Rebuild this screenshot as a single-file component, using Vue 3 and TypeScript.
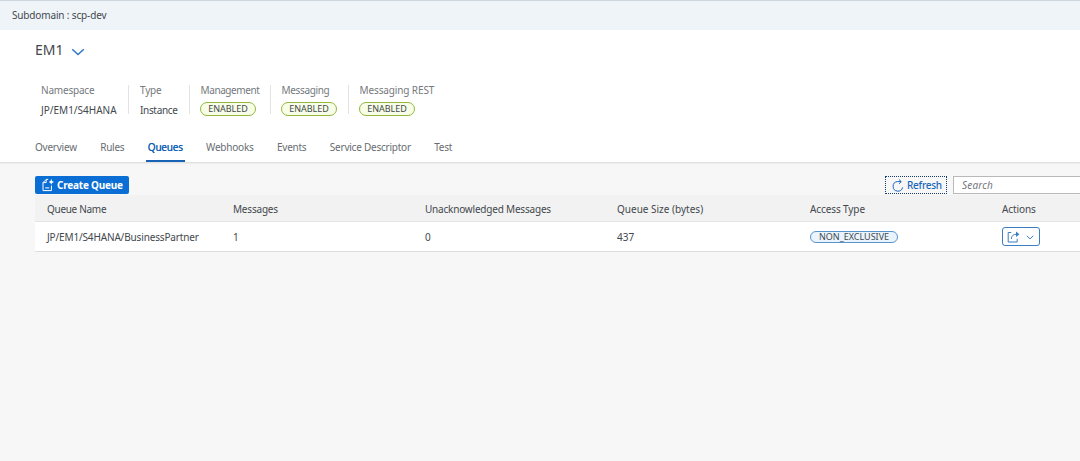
<script setup lang="ts">
interface Attribute {
  label: string
  value: string
  badge: boolean
  key: string
}

const attributes: Attribute[] = [
  { label: 'Namespace', value: 'JP/EM1/S4HANA', badge: false, key: 'namespace' },
  { label: 'Type', value: 'Instance', badge: false, key: 'type' },
  { label: 'Management', value: 'ENABLED', badge: true, key: 'management' },
  { label: 'Messaging', value: 'ENABLED', badge: true, key: 'messaging' },
  { label: 'Messaging REST', value: 'ENABLED', badge: true, key: 'rest' },
]

const tabs: string[] = ['Overview', 'Rules', 'Queues', 'Webhooks', 'Events', 'Service Descriptor', 'Test']
const activeTab = 'Queues'

const columns: { label: string; key: string }[] = [
  { label: 'Queue Name', key: 'name-col' },
  { label: 'Messages', key: 'messages-col' },
  { label: 'Unacknowledged Messages', key: 'unack-col' },
  { label: 'Queue Size (bytes)', key: 'size-col' },
  { label: 'Access Type', key: 'access-col' },
  { label: 'Actions', key: 'actions-col' },
]
</script>

<template>
  <div class="page">
    <div class="subdomain"><span>Subdomain : scp-dev</span></div>
    <header class="header">
      <div class="title">
        <span class="name">EM1</span>
        <svg class="chevron" width="14" height="8" viewBox="0 0 14 8"><path d="M1.2 1.2L7 6.6L12.8 1.2" /></svg>
      </div>
      <div class="attributes">
        <div v-for="a in attributes" :key="a.key" class="attribute" :class="a.key">
          <span class="label">{{ a.label }}</span>
          <span :class="a.badge ? 'badge' : 'value'">{{ a.value }}</span>
        </div>
      </div>
      <nav class="tabs">
        <a v-for="t in tabs" :key="t" class="tab" :class="{ active: t === activeTab }">{{ t }}</a>
      </nav>
    </header>
    <main class="content">
      <div class="toolbar">
        <button class="create">
          <svg width="12" height="14" viewBox="0 0 12 14">
            <path d="M6.2 1.4H4.2L1 4.6V12.6H9.4V7.6M4.2 1.6V4.6H1.2M3.2 9.9H7.2" />
            <path class="solid" d="M9.3 .8L10 3.1L12 4L10 4.9L9.3 6.8L8.5 4.9L6.7 4L8.5 3.1Z" />
          </svg>
          <span>Create Queue</span>
        </button>
        <div class="tools">
          <button class="refresh">
            <svg width="12" height="13" viewBox="0 0 12 13">
              <path d="M9 2.6H5.2A4.8 4.8 0 1 0 10.6 8.4M7 .5L9.2 2.6L7.2 4.8" />
            </svg>
            <span>Refresh</span>
          </button>
          <div class="search">Search</div>
        </div>
      </div>
      <div class="table">
        <div class="row head">
          <div v-for="c in columns" :key="c.key" :class="c.key"><span>{{ c.label }}</span></div>
        </div>
        <div class="row body">
          <div><span class="queue">JP/EM1/S4HANA/BusinessPartner</span></div>
          <div><span>1</span></div>
          <div><span>0</span></div>
          <div><span>437</span></div>
          <div><span class="access">NON_EXCLUSIVE</span></div>
          <div>
            <button class="action">
              <svg width="13" height="12" viewBox="0 0 13 12">
                <path d="M4.2 1.5H1.2V11H10.2V7.8M4.4 8C4.4 4.8 6.2 3.2 10.6 3.2" />
                <path class="solid" d="M9 .4L12.4 3.2L9 6Z" />
              </svg>
              <svg class="small-chevron" width="8" height="5" viewBox="0 0 8 5"><path d="M.8 .8L4 3.9L7.2 .8" /></svg>
            </button>
          </div>
        </div>
      </div>
    </main>
  </div>
</template>

<style>
body {
  margin: 0;
  overflow: hidden;
}
</style>

<style scoped>
.page {
  box-sizing: border-box;
  width: 1080px;
  height: 461px;
  overflow: hidden;
  background: #f7f7f7;
  color: #43484d;
  font-family: "Noto Sans", "Open Sans", sans-serif;
  font-size: 10px;
  white-space: nowrap;
}
svg {
  display: block;
  flex: none;
  fill: none;
  stroke: currentColor;
}
.solid {
  fill: currentColor;
  stroke: none;
}
button {
  box-sizing: border-box;
  margin: 0;
  padding: 0;
  font-family: inherit;
  display: flex;
  align-items: center;
}
.subdomain {
  box-sizing: border-box;
  height: 30px;
  padding-left: 12px;
  border-top: 1px solid #cbd6df;
  background: #eff4f9;
  line-height: 29px;
  letter-spacing: -0.15px;
}
.header {
  box-sizing: border-box;
  height: 133px;
  background: #fff;
  border-bottom: 1px solid #e2e2e2;
  box-shadow: 0 1px 1px #ededed;
}
.title {
  display: flex;
  align-items: center;
  height: 40px;
  padding-left: 35px;
  gap: 8px;
}
.name {
  font-size: 14px;
  line-height: 20px;
}
.chevron {
  margin-top: 3px;
  margin-left: -1px;
  color: #2e78c4;
  stroke-width: 1.5;
}
.attributes {
  display: flex;
  margin-top: 15px;
  height: 29px;
  padding-left: 41px;
}
.attribute {
  box-sizing: border-box;
  height: 29px;
  display: flex;
  flex-direction: column;
  align-items: flex-start;
  border-right: 1px solid #e3e3e3;
}
.attribute + .attribute {
  padding-left: 11px;
}
.namespace { width: 88px; }
.type { width: 61px; }
.management { width: 81px; }
.messaging { width: 78px; }
.rest { border-right: 0; }
.label {
  flex: none;
  height: 17px;
  line-height: 11px;
  color: #75797d;
  letter-spacing: -0.2px;
}
.management .label,
.messaging .label,
.rest .label {
  margin-left: -0.5px;
}
.management .label {
  letter-spacing: -0.4px;
}
.messaging .label {
  letter-spacing: -0.35px;
}
.rest .label {
  letter-spacing: -0.12px;
}
.value {
  flex: none;
  line-height: 16px;
}
.type .value {
  letter-spacing: -0.33px;
}
.badge {
  flex: none;
  box-sizing: border-box;
  width: 56px;
  height: 14px;
  margin-left: -1px;
  border: 1px solid #93b83a;
  border-radius: 7px;
  background: #f7fde6;
  font-size: 9px;
  line-height: 12px;
  text-align: center;
}
.tabs {
  display: flex;
  gap: 23.4px;
  margin-top: 20px;
  padding-left: 35px;
}
.tab {
  height: 28px;
  line-height: 27px;
  color: #686d72;
  letter-spacing: -0.23px;
  box-sizing: border-box;
}
.active {
  color: #1762b5;
  border-bottom: 2px solid #1762b5;
  text-shadow: 0 0 0.5px #1762b5;
  padding: 0 2px;
  margin: 0 -2px;
}
.content {
  padding-left: 35px;
}
.toolbar {
  display: flex;
  justify-content: space-between;
  height: 32px;
  box-sizing: border-box;
  padding-top: 13px;
}
.create {
  width: 94px;
  height: 18px;
  gap: 3px;
  padding-left: 7px;
  border: 0;
  border-radius: 2px;
  background: #0b6ed4;
  color: #fff;
  font-size: 10px;
  font-weight: 700;
  letter-spacing: -0.22px;
}
.tools {
  display: flex;
  gap: 6px;
}
.refresh {
  width: 62px;
  height: 18px;
  gap: 3px;
  padding-left: 6px;
  border: 1px dotted #123b6c;
  background: #f7f7f7;
  color: #1a66b8;
  font-size: 10px;
  font-weight: 500;
  letter-spacing: -0.25px;
}
.search {
  box-sizing: border-box;
  width: 127px;
  height: 18px;
  padding-left: 8px;
  border: 1px solid #b9b9b9;
  border-right: 0;
  background: #fff;
  color: #74777a;
  font-style: italic;
  line-height: 16px;
  letter-spacing: 0.2px;
}
.row {
  display: grid;
  grid-template-columns: 186px 192px 192px 193px 192px 90px;
  box-sizing: border-box;
  padding-left: 12px;
  align-items: center;
}
.head {
  height: 27px;
  padding-top: 1px;
  background: #f2f2f2;
  border-bottom: 1px solid #e4e4e4;
}
.name-col {
  letter-spacing: -0.3px;
}
.messages-col,
.unack-col {
  letter-spacing: -0.2px;
}
.queue {
  letter-spacing: -0.15px;
}
.access-col,
.actions-col {
  letter-spacing: -0.1px;
}
.body {
  height: 30px;
  background: #fff;
  border-bottom: 1px solid #dedede;
}
.access {
  display: block;
  box-sizing: border-box;
  width: 88px;
  height: 12px;
  border: 1px solid #5a94cc;
  border-radius: 6px;
  background: #eaf4fd;
  font-size: 9px;
  line-height: 10px;
  text-align: center;
}
.action {
  width: 38px;
  height: 19px;
  gap: 6px;
  padding-left: 4px;
  border: 1px solid #397fc1;
  border-radius: 3px;
  background: #fff;
  color: #397fc1;
}
.small-chevron {
  margin-top: 2px;
}
</style>
